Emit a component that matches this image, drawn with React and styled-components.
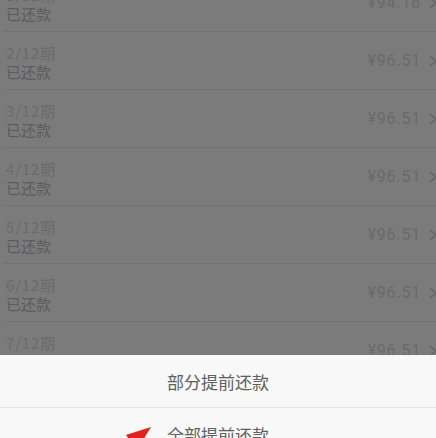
import styled, { createGlobalStyle } from "styled-components";

const GlobalStyle = createGlobalStyle`
  html, body {
    margin: 0;
    padding: 0;
    background: #7b7b7b;
    overflow: hidden;
  }
  body {
    font-family: "Noto Sans CJK SC", "Roboto", sans-serif;
  }
`;

const Screen = styled.div`
  position: relative;
  width: 436px;
  height: 438px;
  overflow: hidden;
  background: #7b7b7b;
`;

const List = styled.div`
  margin-top: -26px;
  display: flex;
  flex-direction: column;
`;

const Row = styled.div`
  height: 57px;
  margin-left: 4px;
  border-bottom: 1px solid #717171;
  display: flex;
  align-items: center;
  justify-content: space-between;
`;

const Info = styled.div`
  display: flex;
  flex-direction: column;
  gap: 1px;
  padding-left: 2px;
  padding-top: 3px;
`;

const Period = styled.span`
  font-size: 15px;
  line-height: 18px;
  letter-spacing: 0.8px;
  color: #6a6a6a;
`;

const Status = styled.span`
  font-size: 15px;
  line-height: 18px;
  color: #5c5c5c;
`;

const Right = styled.div`
  display: flex;
  align-items: center;
  gap: 7px;
  margin-right: -4px;
`;

const Amount = styled.span`
  font-family: "Roboto", "Noto Sans CJK SC", sans-serif;
  font-size: 16px;
  letter-spacing: 0.8px;
  color: #6a6a6a;
`;

const Sheet = styled.div`
  position: absolute;
  left: 0;
  right: 0;
  top: 355px;
  bottom: 0;
  background: #f8f8f8;
  display: flex;
  flex-direction: column;
`;

const Option = styled.div`
  height: 52px;
  flex-shrink: 0;
  display: flex;
  align-items: center;
  justify-content: center;
  font-size: 17px;
  color: #606060;
  border-bottom: ${(p) => (p.$last ? "none" : "1px solid #e6e6e6")};
  position: relative;
`;

const Arrow = styled.svg`
  position: absolute;
  left: 124px;
  top: 18px;
`;

const Chevron = () => (
  <svg width="12" height="14" viewBox="0 0 12 14">
    <polyline
      points="2,2 8,7 2,12"
      fill="none"
      stroke="#636363"
      strokeWidth="1.4"
    />
  </svg>
);

const rows = [
  { period: "1/12期", amount: "94.18" },
  { period: "2/12期", amount: "96.51" },
  { period: "3/12期", amount: "96.51" },
  { period: "4/12期", amount: "96.51" },
  { period: "5/12期", amount: "96.51" },
  { period: "6/12期", amount: "96.51" },
  { period: "7/12期", amount: "96.51" },
  { period: "8/12期", amount: "96.51" },
];

export default function App() {
  return (
    <Screen>
      <GlobalStyle />
      <List>
        {rows.map((r) => (
          <Row key={r.period}>
            <Info>
              <Period>{r.period}</Period>
              <Status>已还款</Status>
            </Info>
            <Right>
              <Amount>¥{r.amount}</Amount>
              <Chevron />
            </Right>
          </Row>
        ))}
      </List>
      <Sheet>
        <Option>部分提前还款</Option>
        <Option $last>
          <Arrow width="30" height="30" viewBox="0 0 30 30">
            <polygon points="27,1 2,9 13,24" fill="#e3211f" />
          </Arrow>
          全部提前还款
        </Option>
      </Sheet>
    </Screen>
  );
}
